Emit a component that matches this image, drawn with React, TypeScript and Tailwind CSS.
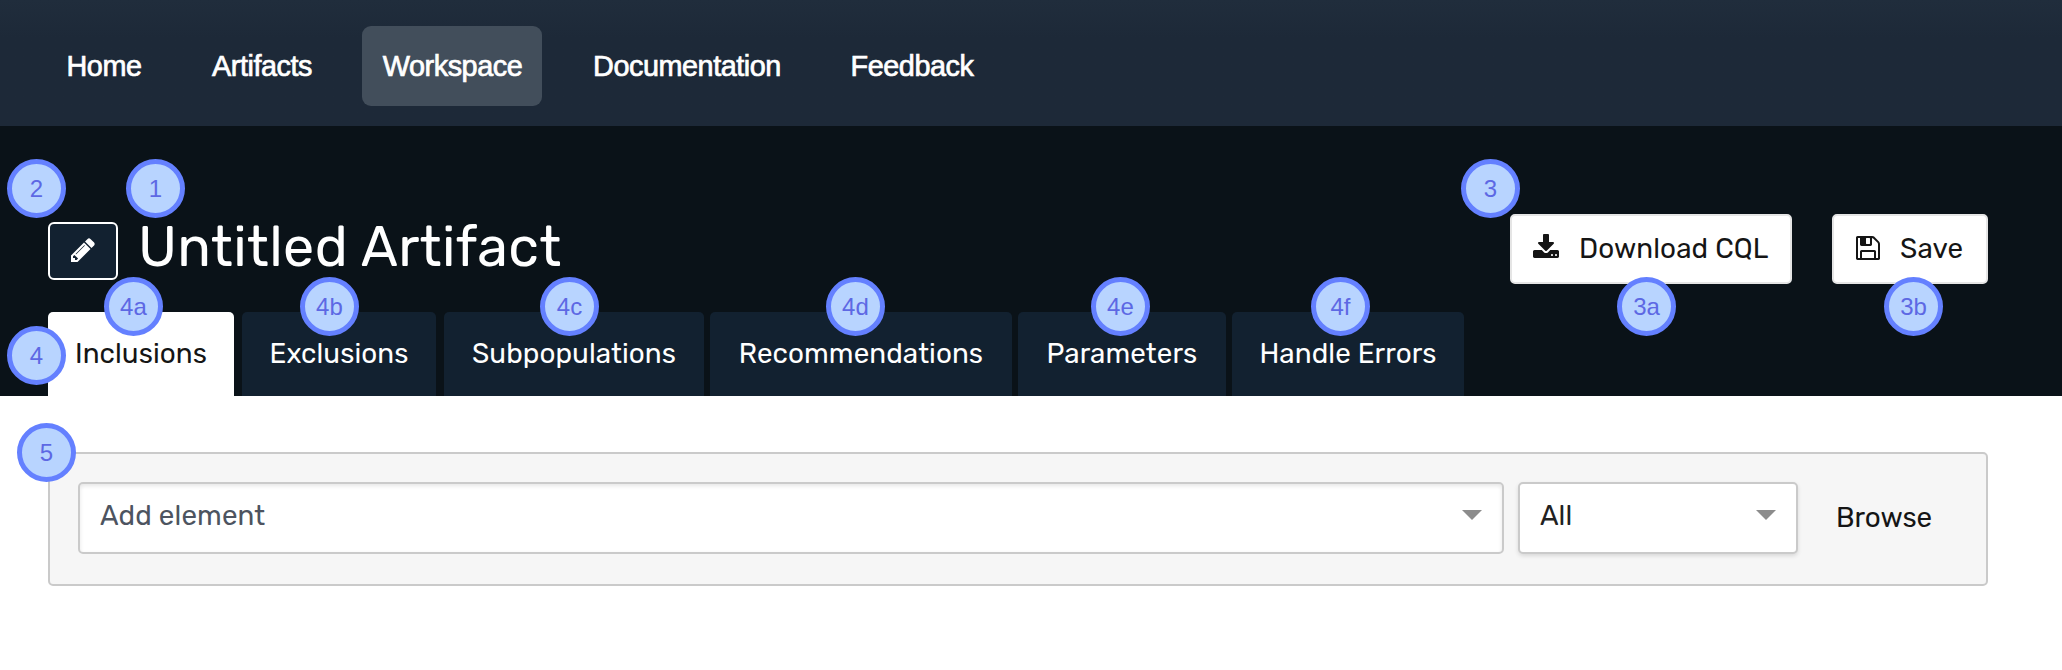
import React from "react";

const rubik = "font-['Rubik','Roboto',sans-serif]";
const arial = "font-['Liberation_Sans',Arial,sans-serif]";

function Badge({ label, place }: { label: string; place: string }) {
  return (
    <span
      className={`absolute flex size-[59px] items-center justify-center rounded-full border-[5px] border-[#6480ff] bg-[#b8d4ff] text-[24px] leading-none text-[#5d68e4] ${arial} ${place}`}
    >
      {label}
    </span>
  );
}

const nav = [
  { label: "Home", style: "ml-[46px] w-[116px]" },
  { label: "Artifacts", style: "ml-[29px] w-[142px]" },
  { label: "Workspace", style: "ml-[29px] w-[180px] bg-[#424e5b] pl-[1px]" },
  { label: "Documentation", style: "ml-[29px] w-[232px]" },
  { label: "Feedback", style: "ml-[28px] w-[162px]" },
];

const tabs = [
  { label: "Inclusions", id: "4a", style: "w-[186px] bg-white text-[#151515]", badge: "left-[56px]" },
  { label: "Exclusions", id: "4b", style: "ml-[8px] w-[194px]", badge: "left-[58px]" },
  { label: "Subpopulations", id: "4c", style: "ml-[8px] w-[260px]", badge: "left-[96px]" },
  { label: "Recommendations", id: "4d", style: "ml-[6px] w-[302px]", badge: "left-[116px]" },
  { label: "Parameters", id: "4e", style: "ml-[6px] w-[208px]", badge: "left-[73px]" },
  { label: "Handle Errors", id: "4f", style: "ml-[6px] w-[232px]", badge: "left-[79px]" },
];

const icons = {
  pencil:
    "M491 1536l91-91-235-235-91 91v107h128v128h107zm523-928q0-22-22-22-10 0-17 7l-542 542q-7 7-7 17 0 22 22 22 10 0 17-7l542-542q7-7 7-17zm-54-192l416 416-832 832h-416v-416zm683 96q0 53-37 90l-166 166-416-416 166-165q36-38 90-38 53 0 91 38l235 234q37 39 37 91z",
  download:
    "M1344 1344q0-26-19-45t-45-19-45 19-19 45 19 45 45 19 45-19 19-45zm256 0q0-26-19-45t-45-19-45 19-19 45 19 45 45 19 45-19 19-45zm128-224v320q0 40-28 68t-68 28h-1472q-40 0-68-28t-28-68v-320q0-40 28-68t68-28h465l135 136q58 56 136 56t136-56l136-136h464q40 0 68 28t28 68zm-325-569q17 41-14 70l-448 448q-18 19-45 19t-45-19l-448-448q-31-29-14-70 17-39 59-39h256v-448q0-26 19-45t45-19h256q26 0 45 19t19 45v448h256q42 0 59 39z",
  save: "M512 1536h768v-384h-768v384zm896 0h128v-896q0-14-10-38.5t-20-34.5l-281-281q-10-10-34-20t-39-10v416q0 40-28 68t-68 28h-576q-40 0-68-28t-28-68v-416h-128v1280h128v-416q0-40 28-68t68-28h832q40 0 68 28t28 68v416zm-384-928v-320q0-13-9.5-22.5t-22.5-9.5h-192q-13 0-22.5 9.5t-9.5 22.5v320q0 13 9.5 22.5t22.5 9.5h192q13 0 22.5-9.5t9.5-22.5zm640 32v928q0 40-28 68t-68 28h-1344q-40 0-68-28t-28-68v-1344q0-40 28-68t68-28h928q40 0 88 20t76 48l280 280q28 28 48 76t20 88z",
};

function Icon({ name }: { name: keyof typeof icons }) {
  return (
    <svg width="28" height="28" viewBox="0 0 1792 1792" fill="currentColor" className="-mt-[2px] shrink-0">
      <path d={icons[name]} />
    </svg>
  );
}

function Caret() {
  return (
    <svg width="20" height="10" viewBox="0 0 20 10" className="-mt-[6px] shrink-0">
      <path d="M0 0h20L10 10z" fill="#8c8c8c" />
    </svg>
  );
}

export default function App() {
  return (
    <div className={`h-[670px] w-[2062px] overflow-hidden bg-white ${rubik} text-[27.8px]`}>
      <nav className={`flex h-[126px] bg-linear-to-b from-[#202d3c] to-[#1d2938] to-30% pt-[26px] text-white ${arial}`}>
        {nav.map((n) => (
          <a
            key={n.label}
            className={`flex h-[80px] items-center justify-center rounded-[9px] pt-[2px] text-[28.8px] tracking-[-0.45px] [-webkit-text-stroke:0.7px_white] ${n.style}`}
          >
            {n.label}
          </a>
        ))}
      </nav>

      <header className="relative flex h-[270px] flex-col bg-[#0a1218] px-[48px] text-white">
        <div className="flex h-[186px] items-start justify-between pr-[26px]">
          <div className="flex items-start pt-[96px]">
            <button className="flex h-[58px] w-[70px] items-center justify-center rounded-[6px] border-2 border-white bg-[#122130]">
              <Icon name="pencil" />
            </button>
            <h1 className="ml-[20px] -mt-[8px] text-[55.6px] leading-[66px] tracking-[0.4px]">Untitled Artifact</h1>
          </div>
          <div className="flex gap-[40px] pt-[88px] text-[#151515]">
            <button className="flex h-[70px] w-[282px] items-center rounded-[5px] border-2 border-[#e5e5e5] bg-white pl-[20px]">
              <Icon name="download" />
              <span className="ml-[19px] whitespace-nowrap tracking-[0.1px]">Download CQL</span>
            </button>
            <button className="flex h-[70px] w-[156px] items-center rounded-[5px] border-2 border-[#e5e5e5] bg-white pl-[20px]">
              <Icon name="save" />
              <span className="ml-[18px] tracking-[0.1px]">Save</span>
            </button>
          </div>
        </div>
        <div className="flex h-[84px] tracking-[0.08px]">
          {tabs.map((t) => (
            <div key={t.id} className={`relative flex h-full items-center justify-center whitespace-nowrap rounded-t-[5px] ${t.id === "4a" ? "" : "bg-[#122130]"} ${t.style}`}>
              {t.label}
              <Badge label={t.id} place={`-top-[35px] ${t.badge}`} />
            </div>
          ))}
        </div>
        <Badge label="2" place="left-[7px] top-[33px]" />
        <Badge label="1" place="left-[126px] top-[33px]" />
        <Badge label="3" place="left-[1461px] top-[33px]" />
        <Badge label="3a" place="left-[1617px] top-[151px]" />
        <Badge label="3b" place="left-[1884px] top-[151px]" />
        <Badge label="4" place="left-[7px] top-[200px]" />
      </header>

      <main className="px-[48px] pt-[56px]">
        <section className="relative flex h-[134px] w-[1940px] rounded-[5px] border-2 border-[#cacaca] bg-[#f6f6f6] pl-[28px] pt-[28px]">
          <div className="flex h-[72px] w-[1426px] items-center justify-between rounded-[5px] border-2 border-[#cacaca] bg-white pl-[20px] pr-[20px] text-[#4d5460] shadow-[inset_0_2px_4px_rgba(0,0,0,0.1)]">
            <span className="-mt-[4px] tracking-[0.12px]">Add element</span>
            <Caret />
          </div>
          <div className="ml-[14px] flex h-[72px] w-[280px] items-center justify-between rounded-[5px] border-2 border-[#cacaca] bg-white pl-[20px] pr-[20px] text-[#222] shadow-[0_2px_4px_rgba(0,0,0,0.12)]">
            <span className="-mt-[4px]">All</span>
            <Caret />
          </div>
          <button className="ml-[38px] h-[72px] text-[#151515]">Browse</button>
          <Badge label="5" place="-left-[33px] -top-[31px]" />
        </section>
      </main>
    </div>
  );
}
